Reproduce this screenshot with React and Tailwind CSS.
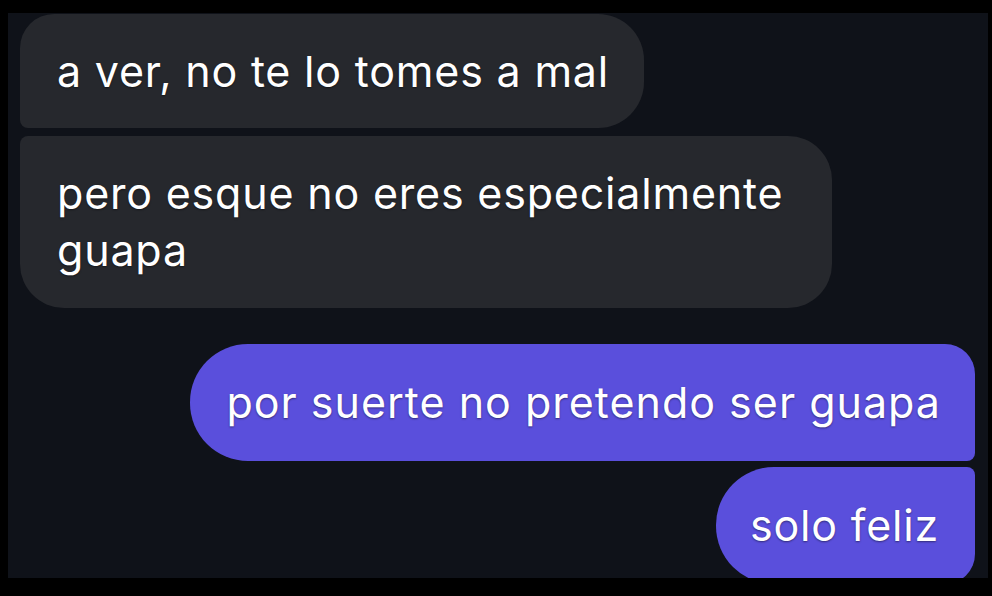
export default function App() {
  const font = { fontFamily: "Inter, 'Noto Sans', Arial, sans-serif" };
  return (
    <div className="w-[992px] h-[596px] bg-black pt-[13px] pl-[8px] pr-[4px] pb-[18px]">
      <div
        className="w-full h-full bg-[#0f1219] overflow-hidden flex flex-col pl-[12px] pr-[13px] text-white text-[43px] leading-[57px] tracking-[0.8px] [text-shadow:0_1px_2px_rgba(0,0,0,0.45)]"
        style={font}
      >
        <div className="self-start mt-[1px] h-[114px] shrink-0 flex items-center pl-[37px] pr-[35px] bg-[#26282d] rounded-tl-[34px] rounded-bl-[8px] rounded-tr-[46px] rounded-br-[46px]">
          a ver, no te lo tomes a mal
        </div>
        <div className="self-start mt-[8px] w-[812px] shrink-0 py-[29px] pl-[37px] pr-[40px] bg-[#26282d] rounded-tl-[8px] rounded-bl-[44px] rounded-tr-[44px] rounded-br-[44px]">
          pero esque no eres especialmente guapa
        </div>
        <div className="self-end mt-[36px] h-[117px] shrink-0 flex items-center pl-[36px] pr-[34px] tracking-[1px] bg-[#5a4fdc] rounded-tl-[58px] rounded-bl-[58px] rounded-tr-[30px] rounded-br-[8px]">
          por suerte no pretendo ser guapa
        </div>
        <div className="self-end mt-[6px] h-[117px] shrink-0 flex items-center pl-[34px] pr-[36px] bg-[#5a4fdc] rounded-tl-[58px] rounded-bl-[58px] rounded-tr-[8px] rounded-br-[30px]">
          solo feliz
        </div>
      </div>
    </div>
  );
}
